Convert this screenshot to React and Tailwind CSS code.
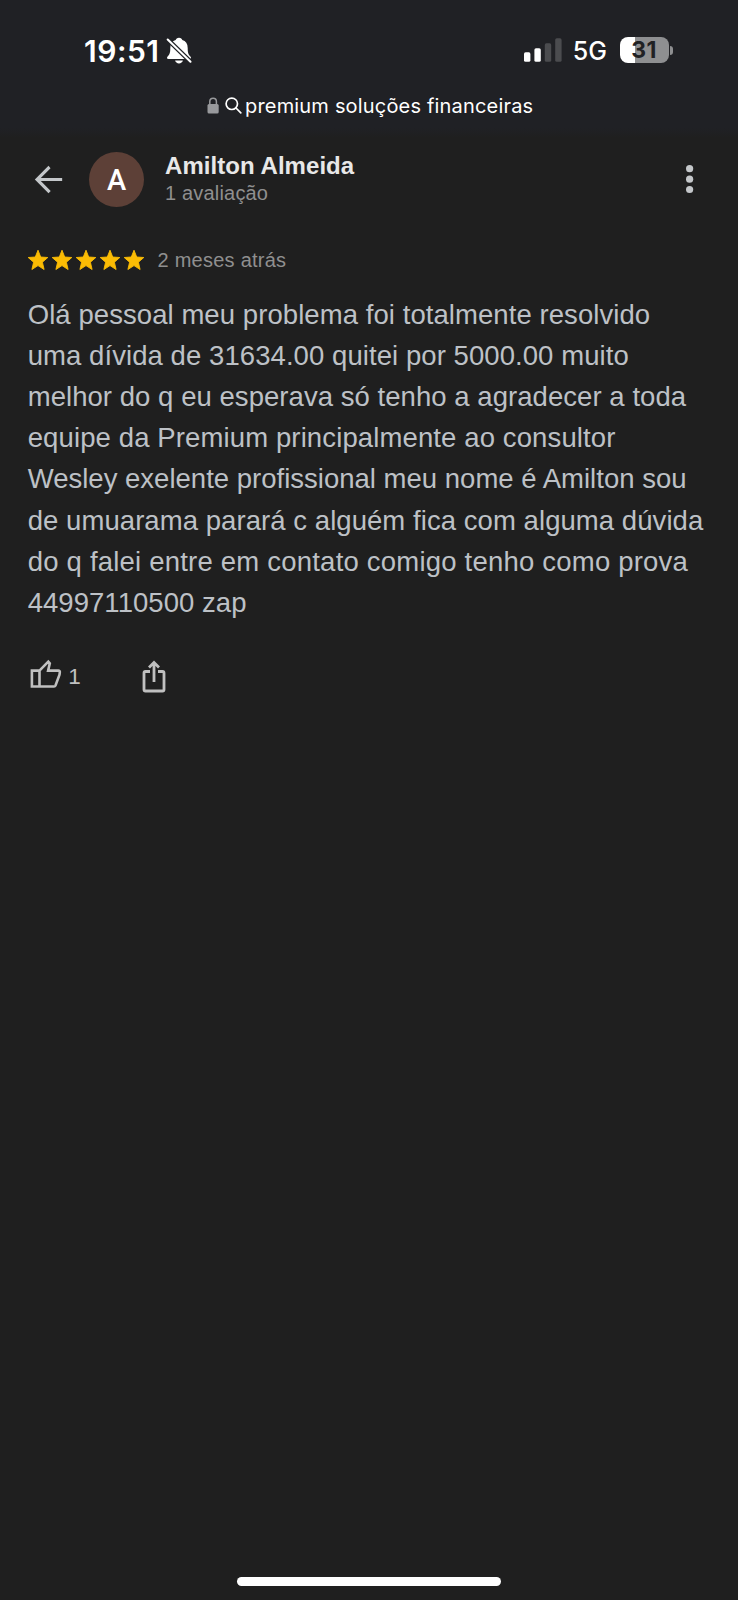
import React from "react";

const review = [
  { text: "Olá pessoal meu problema foi totalmente resolvido", tracking: "tracking-[0.07px]" },
  { text: "uma dívida de 31634.00 quitei por 5000.00 muito", tracking: "tracking-[0.07px]" },
  { text: "melhor do q eu esperava só tenho a agradecer a toda", tracking: "tracking-[0.05px]" },
  { text: "equipe da Premium principalmente ao consultor", tracking: "tracking-[0.12px]" },
  { text: "Wesley exelente profissional meu nome é Amilton sou", tracking: "tracking-[0.01px]" },
  { text: "de umuarama parará c alguém fica com alguma dúvida", tracking: "tracking-[0.06px]" },
  { text: "do q falei entre em contato comigo tenho como prova", tracking: "tracking-[0.21px]" },
  { text: "44997110500 zap", tracking: "tracking-[0.04px]" },
];

function BellOff() {
  return (
    <svg className="ml-[6px] h-[27px] w-[26px]" viewBox="0 0 26 27" fill="none">
      <path d="M13 .8c1.900 0 3 1 3.300 2.300 3.500 1 5.400 3.900 5.400 7.900 0 5.200.7 6.200 2.700 8.500 1.100 1.400.7 2.500-.9 2.500H2.500C.9 22 .5 20.900 1.600 19.500 3.600 17.200 4.300 16.200 4.300 11c0-4 1.900-6.900 5.400-7.900C10 1.800 11.100.8 13 .8Z" fill="#fff" />
      <path d="M9.100 23.500h7.800c-.4 1.800-2 2.900-3.900 2.900s-3.500-1.100-3.900-2.900Z" fill="#fff" />
      <path d="M0 .9 26 26.100" stroke="#202125" strokeWidth="4.600" />
      <path d="M1.700 2.500 24.500 24.700" stroke="#fff" strokeWidth="2.100" strokeLinecap="round" />
    </svg>
  );
}

function Battery() {
  return (
    <div className="ml-[13px] flex items-center">
      <div className="flex h-[26px] w-[49px] items-center justify-center rounded-[8px] bg-[linear-gradient(90deg,#fff_0_15px,#8e8f91_15px)] font-['Inter',sans-serif] text-[23px] font-bold leading-none tracking-[0.4px] text-[#202124]">
        <span className="-ml-px mt-px">31</span>
      </div>
      <div className="ml-px h-[9px] w-[3px] rounded-r-full bg-[#8e8f91]" />
    </div>
  );
}

function Star() {
  return (
    <svg className="size-[24px]" viewBox="0 0 24 24" fill="#fbbc04" stroke="#fbbc04" strokeWidth="0.900" strokeLinejoin="round">
      <path d="M12 2.200 14.700 9 21.800 9.500 16.400 14.200 18.100 21.500 12 17.600 5.900 21.500 7.600 14.200 2.200 9.500 9.300 9Z" />
    </svg>
  );
}

export default function App() {
  return (
    <div className="flex h-[1600px] w-[738px] flex-col overflow-hidden bg-[#1f1f1f] font-['Liberation_Sans',Arial,sans-serif]">
      <header className="h-[140px] shrink-0 bg-[linear-gradient(#202125_0_128px,#1f1f1f_138px)] pt-[30px] font-['Inter',sans-serif] text-white">
        <div className="flex h-[40px] items-center pl-[84px] pr-[65px]">
          <span className="mt-[2px] text-[30px] font-semibold leading-[40px] tracking-[0.500px]">19:51</span>
          <BellOff />
          <svg className="ml-auto h-[24px] w-[38px]" viewBox="0 0 38 24">
            <rect x="0" y="14.300" width="6.400" height="9.500" rx="1.600" fill="#fff" />
            <rect x="10.400" y="10.300" width="6.400" height="13.500" rx="1.600" fill="#fff" />
            <rect x="20.800" y="5.300" width="6.400" height="18.500" rx="1.600" fill="#4b4c4f" />
            <rect x="31.200" y="0.300" width="6.400" height="23.500" rx="1.600" fill="#4b4c4f" />
          </svg>
          <span className="ml-[11px] mt-[2px] text-[25px] font-medium leading-[40px]">5G</span>
          <Battery />
        </div>
        <div className="mt-[22px] flex h-[26px] items-center pl-[207px]">
          <svg className="h-[17px] w-[12px]" viewBox="0 0 12 17">
            <rect x="0.500" y="7" width="11.200" height="9.500" rx="1.500" fill="#98999c" />
            <path d="M2.800 8V4.500a3.300 3.300 0 0 1 6.600 0V8" fill="none" stroke="#98999c" strokeWidth="1.500" />
          </svg>
          <svg className="ml-[6px] size-[17px]" viewBox="0 0 17 17" fill="none" stroke="#fff" strokeWidth="1.700" strokeLinecap="round">
            <circle cx="6.800" cy="6.800" r="5.700" />
            <path d="m11 11 4.800 4.800" />
          </svg>
          <span className="ml-[3px] mt-px whitespace-nowrap text-[20px] leading-[26px] tracking-[0.180px]">premium soluções financeiras</span>
        </div>
      </header>

      <section className="flex h-[78px] shrink-0 items-center pl-[28px] pr-[28px]">
        <svg className="size-[41px]" viewBox="0 0 24 24" fill="#c4c7ca">
          <path d="M20 11.100H7.500l5.700-5.700L12 4l-8 8 8 8 1.300-1.300-5.800-5.800H20z" />
        </svg>
        <div className="ml-[20px] flex size-[55px] items-center justify-center rounded-full bg-[#5d4037] pt-[3px] font-['Roboto',sans-serif] text-[29px] font-medium leading-none text-white">
          A
        </div>
        <div className="-mt-px ml-[21px] flex flex-col">
          <h1 className="whitespace-nowrap text-[24px] font-bold leading-[28px] tracking-[0.050px] text-[#e8e8e8]">Amilton Almeida</h1>
          <p className="whitespace-nowrap text-[20px] leading-[26px] tracking-[0.180px] text-[#8f8f8f]">1 avaliação</p>
        </div>
        <svg className="ml-auto h-[30px] w-[41px]" viewBox="0 0 41 30" fill="#c4c7ca">
          <circle cx="20.600" cy="4.700" r="3.600" />
          <circle cx="20.600" cy="15.200" r="3.600" />
          <circle cx="20.600" cy="25.500" r="3.600" />
        </svg>
      </section>

      <main className="pl-[27.700px]">
        <div className="mt-[28px] flex h-[28px] items-center">
          <div className="-ml-[1.700px] flex w-[120px]">
            <Star />
            <Star />
            <Star />
            <Star />
            <Star />
          </div>
          <span className="ml-[11.500px] whitespace-nowrap text-[20px] leading-[28px] tracking-[0.250px] text-[#8f8f8f]">2 meses atrás</span>
        </div>
        <p className="mt-[19.600px] text-[27.500px] leading-[41.200px] text-[#bdc1c6]">
          {review.map((line) => (
            <span key={line.text} className={`block whitespace-nowrap ${line.tracking}`}>
              {line.text}
            </span>
          ))}
        </p>
        <div className="mt-[34px] flex h-[36px] items-center">
          <svg className="ml-px h-[32px] w-[34px]" viewBox="0 0 34 32" fill="none" stroke="#c0c0c0" strokeWidth="2.600">
            <path d="M2.900 11.600h7.600v15.900H2.900zM10.500 11.600l8.800-9 1.500 1.700-1.700 7.300h10.200c1.100 0 1.700.8 1.500 1.900l-.3 2.300-4 10.700c-.3.700-.8 1-1.500 1h-14.500" />
          </svg>
          <span className="ml-[5.500px] mt-[4px] text-[22.500px] leading-[36px] text-[#c0c0c0]">1</span>
          <svg className="ml-[60.500px] mt-[2px] h-[34px] w-[28px]" viewBox="0 0 28 34" fill="none" stroke="#c0c0c0" strokeWidth="2.800">
            <path d="M9 12.500H4.500A1.500 1.500 0 0 0 3 14v16.500A1.500 1.500 0 0 0 4.500 32h17a1.500 1.500 0 0 0 1.500-1.500V14a1.500 1.500 0 0 0-1.500-1.500H17M13 23V4M8 8.500l5-5 5 5" />
          </svg>
        </div>
      </main>

      <footer className="mt-auto flex justify-center pb-[14px]">
        <div className="h-[9px] w-[264px] rounded-full bg-white" />
      </footer>
    </div>
  );
}
